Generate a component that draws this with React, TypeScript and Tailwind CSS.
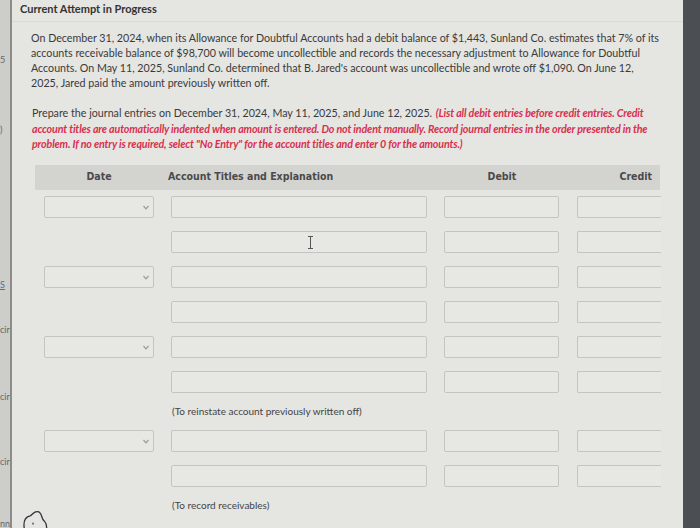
import type { ReactNode } from "react";

/* ---------- 小部件 ---------- */

function Box({ className = "", children }: { className?: string; children?: ReactNode }) {
  return (
    <div
      className={`relative h-[22px] shrink-0 rounded-[2px] border border-[#c4c4c1] bg-[#e7e7e4] ${className}`}
    >
      {children}
    </div>
  );
}

function DateSelect() {
  return (
    <Box className="w-[110px]">
      <svg
        className="absolute right-[4px] top-[8px]"
        width="6"
        height="5"
        viewBox="0 0 6 5"
        fill="none"
        stroke="#9a9a98"
        strokeWidth="1.2"
      >
        <path d="M0.5 1 L3 3.8 L5.5 1" />
      </svg>
    </Box>
  );
}

function Row({ date, cursor }: { date?: boolean; cursor?: boolean }) {
  return (
    <div className="flex items-center pl-[9px]">
      {date ? <DateSelect /> : <div className="w-[110px] shrink-0" />}
      <Box className="ml-[17px] w-[256px]">
        {cursor && (
          <svg
            className="absolute left-[135px] top-[4px]"
            width="7"
            height="13"
            viewBox="0 0 7 13"
            fill="none"
            stroke="#555"
            strokeWidth="1"
          >
            <path d="M1 0.5 H6 M3.5 0.5 V12.5 M1 12.5 H6" />
          </svg>
        )}
      </Box>
      <Box className="ml-[17px] w-[115px]" />
      <Box className="ml-[18px] w-[84px] rounded-r-none border-r-0" />
    </div>
  );
}

function Caption({ children }: { children: ReactNode }) {
  return (
    <div className="pl-[137px] text-[10px] leading-[11px] text-[#444]">{children}</div>
  );
}

/* ---------- 页面 ---------- */

export default function App() {
  return (
    <div
      className="flex h-[528px] w-[700px] overflow-hidden bg-[#e5e5e2] text-[#3b3b3b]"
      style={{ fontFamily: "Lato, 'Open Sans', sans-serif" }}
    >
      {/* 左侧被截断的边栏 */}
      <div className="flex w-[12px] shrink-0 flex-col border-r-2 border-[#8c8c8a] bg-[#cdcdca] text-[9px] leading-[10px] text-[#666]">
        <span className="mt-[55px]">5</span>
        <span className="mt-[60px]">)</span>
        <span className="mt-[145px] text-[#4a6fa8] underline">S</span>
        <span className="mt-[35px]">cir</span>
        <span className="mt-[57px]">cir</span>
        <span className="mt-[55px]">cir</span>
        <span className="mt-[52px]">nn</span>
      </div>

      {/* 主体 */}
      <div className="flex min-w-0 flex-1 flex-col">
        <div className="border-b border-[#dadad7] pb-[5px] pl-[8px] pt-[2px] text-[11px] font-bold leading-[14px] text-[#333]">
          Current Attempt in Progress
        </div>

        <p className="ml-[19px] mt-[8px] w-[630px] text-[10.7px] leading-[15px] text-[#3a3a3a]">
          On December 31, 2024, when its Allowance for Doubtful Accounts had a debit balance of $1,443, Sunland Co. estimates that 7% of its accounts receivable balance of $98,700 will become uncollectible and records the necessary adjustment to Allowance for Doubtful Accounts. On May 11, 2025, Sunland Co. determined that B. Jared's account was uncollectible and wrote off $1,090. On June 12, 2025, Jared paid the amount previously written off.
        </p>

        <p className="ml-[20px] mt-[15px] w-[632px] text-[10.7px] leading-[15.5px] text-[#3a3a3a]">
          Prepare the journal entries on December 31, 2024, May 11, 2025, and June 12, 2025.{" "}
          <span className="ml-[1px] font-bold italic tracking-[-0.15px] text-[#d8304f]">
            (List all debit entries before credit entries. Credit account titles are automatically indented when amount is entered. Do not indent manually. Record journal entries in the order presented in the problem. If no entry is required, select "No Entry" for the account titles and enter 0 for the amounts.)
          </span>
        </p>

        {/* 表格 */}
        <div className="ml-[23px] mt-[13px] w-[625px]">
          <div
            className="flex h-[25px] items-center whitespace-nowrap bg-[#d3d3d0] text-[10.5px] font-bold text-[#4a4a4a]"
            style={{ fontFamily: "'DejaVu Sans Condensed', 'DejaVu Sans', sans-serif" }}
          >
            <span className="w-[128px] text-center">Date</span>
            <span className="ml-[5px] w-[300px]">Account Titles and Explanation</span>
            <span className="w-[68px] text-center">Debit</span>
            <span className="w-[116px] text-right">Credit</span>
          </div>

          <div className="mt-[6px] flex flex-col gap-[13px]">
            <Row date />
            <Row cursor />
            <Row date />
            <Row />
            <Row date />
            <Row />
            <Caption>(To reinstate account previously written off)</Caption>
            <Row date />
            <Row />
            <Caption>(To record receivables)</Caption>
          </div>
        </div>

        <svg className="ml-[9px] mt-[-4px]" width="28" height="22" viewBox="0 0 28 22" fill="none" stroke="#333" strokeWidth="1.3">
          <path d="M3 22 C2 15 4 10 9 9 C12 8 13 3 18 5 C22 7 20 13 24 15 C26 17 26 20 26 22" />
          <rect x="11" y="16" width="2" height="2" fill="#7a7a6a" stroke="none" />
        </svg>
      </div>

      {/* 右侧深色边框 */}
      <div className="w-[17px] shrink-0 bg-[#4b4e53]" />
    </div>
  );
}
